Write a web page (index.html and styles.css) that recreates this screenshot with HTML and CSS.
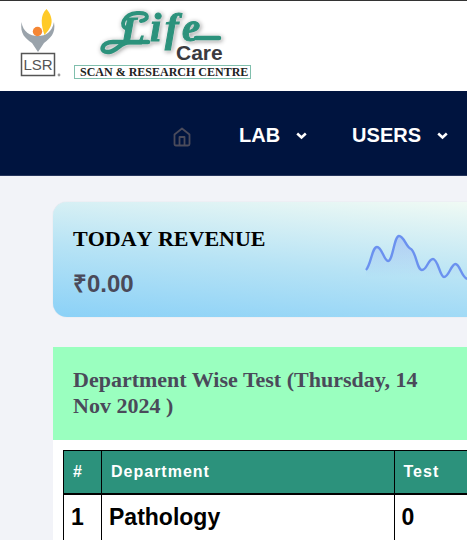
FILE: index.html
```html
<!DOCTYPE html>
<html lang="en">
<head>
<meta charset="utf-8">
<meta name="viewport" content="width=device-width, initial-scale=1">
<title>Life Care Scan &amp; Research Centre</title>
<link rel="stylesheet" href="styles.css">
</head>
<body>
<header class="brand">
  <svg class="emblem" width="46" height="72" viewBox="18 6 46 72" aria-hidden="true">
    <path d="M21.500 22C23 32 30 36 38 36C46 36 52 32 54 22C56 34 50 38 44 43L38 52L32 43C25 38 20 34 21.500 22Z" fill="#9aa3ab"/>
    <path d="M46.500 9C40 15 41 25 44.500 35C50 29 53 24 51 17C50 13 48 11 46.500 9Z" fill="#ffca28"/>
    <circle cx="37.500" cy="31.500" r="4.700" fill="#f58634"/>
    <rect x="21.500" y="53.500" width="33" height="22" fill="none" stroke="#555" stroke-width="1.500"/>
    <text x="38" y="70" class="emblem-text" text-anchor="middle">LSR</text>
    <circle cx="59" cy="75" r="1.400" fill="#999"/>
  </svg>
  <svg class="logo" width="180" height="74" viewBox="73 6 180 74" role="img" aria-label="Life Care Scan &amp; Research Centre">
    <g class="script">
      <path d="M128 42H113C101 42 99 53 109 52C118 51 120 42 130 42H148" fill="none" stroke="#2c927c" stroke-width="4.500" stroke-linecap="round"/>
      <path d="M128 29C118 27 124 14 137 13C150 12 149 20 141 21" fill="none" stroke="#2c927c" stroke-width="4" stroke-linecap="round"/>
      <path d="M196 38H219" stroke="#2c927c" stroke-width="4.500" stroke-linecap="round"/>
      <text x="120" y="44" class="life">L<tspan x="150" y="41">i</tspan><tspan x="165">f</tspan><tspan x="182">e</tspan></text>
    </g>
    <text x="176" y="60" class="care">Care</text>
    <rect x="74.500" y="65.500" width="176" height="13" fill="#fff" stroke="#80bfad"/>
    <text x="80" y="76" class="tagline">SCAN &amp; RESEARCH CENTRE</text>
  </svg>
</header>
<nav class="nav" aria-label="Main">
  <a href="#" class="home" aria-label="Home">
    <svg width="18" height="20" viewBox="0 0 18 20" fill="none" stroke="#4b4b5b" stroke-width="1.800" stroke-linejoin="round"><path d="M1.500 7.500 9 1.500 16.500 7.500V17Q16.500 18.500 15 18.500H3Q1.500 18.500 1.500 17ZM6.500 18V10H11.500V18"/></svg>
  </a>
  <button type="button" class="menu">LAB
    <svg width="11" height="8" viewBox="0 0 11 8" fill="none" stroke="#fff" stroke-width="2.500"><path d="M1.200 1.500 5.500 5.500 9.800 1.500"/></svg>
  </button>
  <button type="button" class="menu">USERS
    <svg width="11" height="8" viewBox="0 0 11 8" fill="none" stroke="#fff" stroke-width="2.500"><path d="M1.200 1.500 5.500 5.500 9.800 1.500"/></svg>
  </button>
</nav>
<main class="content">
  <section class="revenue">
    <div>
      <h2 class="revenue-title">TODAY REVENUE</h2>
      <p class="amount">₹0.00</p>
    </div>
    <svg class="chart" width="102" height="56" viewBox="366 230 102 56" aria-hidden="true">
      <defs><linearGradient id="area" x1="0" y1="0" x2="0" y2="1"><stop offset="0" stop-color="#7c9af2" stop-opacity=".4"/><stop offset=".8" stop-color="#7c9af2" stop-opacity="0"/></linearGradient></defs>
      <path d="M367 269C372 264 373 246 378 246C383 246 385 260 389 260C394 260 395 235 400 235C405 235 407 246 412 248C417 251 418 269 423 269C428 269 429 258 434 258C439 258 441 276 445 276C450 276 452 263 456.500 263C461 263 463 278 469 278V286H367Z" fill="url(#area)"/>
      <path d="M367 269C372 264 373 246 378 246C383 246 385 260 389 260C394 260 395 235 400 235C405 235 407 246 412 248C417 251 418 269 423 269C428 269 429 258 434 258C439 258 441 276 445 276C450 276 452 263 456.500 263C461 263 463 278 469 278" fill="none" stroke="#6b91ef" stroke-width="2.400"/>
    </svg>
  </section>
  <section class="tests">
    <h2 class="tests-title">Department Wise Test (Thursday, 14 Nov 2024 )</h2>
    <div class="table-wrap">
      <table>
        <thead><tr><th scope="col" class="num">#</th><th scope="col">Department</th><th scope="col" class="count">Test</th></tr></thead>
        <tbody><tr><td>1</td><td>Pathology</td><td>0</td></tr></tbody>
      </table>
    </div>
  </section>
</main>
</body>
</html>
```
FILE: styles.css
```css
* { box-sizing: border-box; }
body {
  margin: 0;
  background: #f2f3f8;
  color: #4a4a5a;
  font-family: "Liberation Sans", Arial, sans-serif;
  overflow: hidden;
}
h2, p { margin: 0; }
.brand {
  display: flex;
  align-items: flex-start;
  gap: 9px;
  padding: 5px 18px 11px;
  border-top: 1px solid #333;
  background: #fff;
}
.emblem, .logo { flex: none; display: block; overflow: visible; }
.emblem-text { font: 15px "Liberation Sans", sans-serif; fill: #555; }
.script { filter: drop-shadow(0 0 1px #fff) drop-shadow(1px 1px 2px #999); }
.life {
  font: italic bold 41px "Liberation Serif", serif;
  fill: #2c927c;
  stroke: #2c927c;
  stroke-width: 1px;
}
.care { font: bold 21px "Liberation Sans", sans-serif; fill: #3b3b40; }
.tagline { font: bold 12px "Liberation Serif", serif; fill: #222; }
.nav {
  display: flex;
  align-items: center;
  gap: 45px;
  padding: 32px 0 27px 173px;
  background: #00143f;
  border-bottom: 1px solid #26355c;
}
.home { display: flex; margin: 3px 3px 0 0; }
.menu {
  display: flex;
  align-items: center;
  gap: 16px;
  flex: none;
  padding: 0;
  border: 0;
  background: none;
  color: #fff;
  font: bold 20px/25px "Liberation Sans", Arial, sans-serif;
}
.content { padding: 26px 0 0 53px; }
.revenue {
  display: flex;
  justify-content: space-between;
  padding: 23px 0 18px 20px;
  border-radius: 14px 0 0 14px;
  background: linear-gradient(5deg, #8bd1f7, #b7e3f5 48%, #f0faf4);
  box-shadow: 0 0 1px #bccbd8;
}
.revenue-title {
  color: #000;
  font: bold 22px/28px "Liberation Serif", "Times New Roman", serif;
  font-kerning: none;
}
.amount {
  margin-top: 15px;
  font-size: 24px;
  font-weight: bold;
  line-height: 31px;
}
.chart { flex: none; margin-top: 6px; }
.tests { margin-top: 30px; background: #fff; }
.tests-title {
  padding: 20px 20px 21px;
  background: #9affbf;
  font: bold 22px/26px "Liberation Serif", "Times New Roman", serif;
}
.table-wrap { padding: 10px 0 0 10px; }
table {
  width: 100%;
  border-collapse: collapse;
  table-layout: fixed;
  color: #000;
  text-align: left;
}
th, td { border: 1px solid #000; border-right: 0; }
th {
  padding: 11px 9px;
  border-bottom-width: 2px;
  background: #2c927c;
  color: #fff;
  font-size: 16px;
  line-height: 20px;
  letter-spacing: 1px;
}
td {
  padding: 8px 7px 12px;
  font-size: 23px;
  font-weight: bold;
  line-height: 28px;
  vertical-align: top;
}
.num { width: 38px; }
.count { width: 73px; }
```
